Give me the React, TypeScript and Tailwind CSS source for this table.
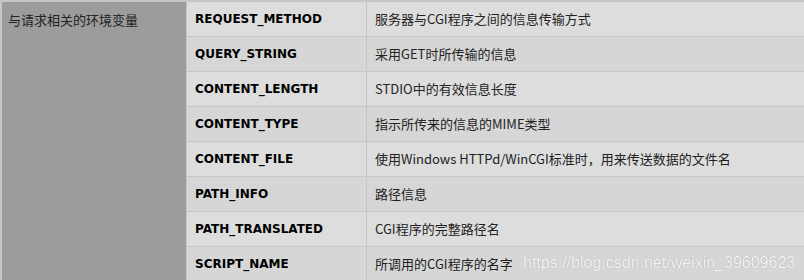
import React from "react";

const rows: [string, string][] = [
  ["REQUEST_METHOD", "服务器与CGI程序之间的信息传输方式"],
  ["QUERY_STRING", "采用GET时所传输的信息"],
  ["CONTENT_LENGTH", "STDIO中的有效信息长度"],
  ["CONTENT_TYPE", "指示所传来的信息的MIME类型"],
  ["CONTENT_FILE", "使用Windows HTTPd/WinCGI标准时，用来传送数据的文件名"],
  ["PATH_INFO", "路径信息"],
  ["PATH_TRANSLATED", "CGI程序的完整路径名"],
  ["SCRIPT_NAME", "所调用的CGI程序的名字"],
];

export default function App() {
  return (
    <div className="relative w-[804px] h-[280px] overflow-hidden bg-[#c6c6c6]">
      <div className="pt-[2px] pl-[2px] grid grid-cols-[184px_179px_1fr] auto-rows-[34px] gap-[1px]">
        <div className="row-span-8 bg-[#9c9c9c] px-[6px] pt-[9px] text-[13px] leading-[17px] text-[#222] font-['Noto_Sans_CJK_SC',sans-serif]">
          与请求相关的环境变量
        </div>
        {rows.map(([k, v], i) => (
          <React.Fragment key={k}>
            <div
              className={
                i % 2 === 0
                  ? "bg-[#dddddd] flex items-center pl-[8px] text-[12px] font-bold text-black font-['DejaVu_Sans',sans-serif]"
                  : "bg-[#d6d6d6] flex items-center pl-[8px] text-[12px] font-bold text-black font-['DejaVu_Sans',sans-serif]"
              }
            >
              {k}
            </div>
            <div
              className={
                i % 2 === 0
                  ? "bg-[#dddddd] flex items-center pl-[8px] text-[13px] text-[#222] font-['Noto_Sans_CJK_SC',sans-serif]"
                  : "bg-[#d6d6d6] flex items-center pl-[8px] text-[13px] text-[#222] font-['Noto_Sans_CJK_SC',sans-serif]"
              }
            >
              {v}
            </div>
          </React.Fragment>
        ))}
      </div>
      <div className="absolute left-[523px] top-[253px] text-[16px] leading-[20px] text-[#f4f4f4] font-['Liberation_Sans',Arial,sans-serif] [text-shadow:0_0_1px_#9a9a9a]">
        https://blog.csdn.net/weixin_39609623
      </div>
    </div>
  );
}
